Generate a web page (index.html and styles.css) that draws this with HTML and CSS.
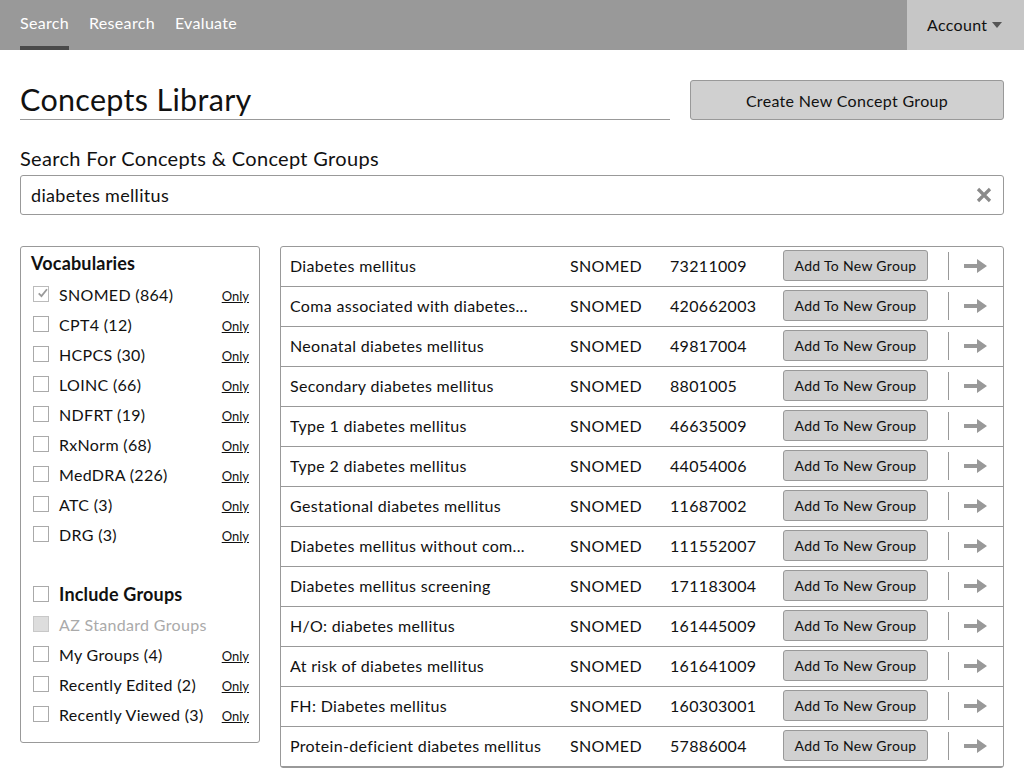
FILE: index.html
```html
<!DOCTYPE html>
<html>
<head>
<meta charset="utf-8">
<link rel="stylesheet" href="styles.css">
</head>
<body>
<header class="nav">
  <nav class="nav-links">
    <a class="nav-link active">Search</a>
    <a class="nav-link">Research</a>
    <a class="nav-link">Evaluate</a>
  </nav>
  <div class="account">Account <span class="caret"></span></div>
</header>
<main class="page">
  <div class="title-row">
    <h1 class="title">Concepts Library</h1>
    <button class="btn create">Create New Concept Group</button>
  </div>
  <label class="search-label">Search For Concepts &amp; Concept Groups</label>
  <div class="search-box">
    <span class="search-text">diabetes mellitus</span>
    <svg class="clear" width="16" height="16" viewBox="0 0 16 16"><path d="M2 2 L14 14 M14 2 L2 14" stroke="#8a8a8a" stroke-width="3.2" stroke-linecap="butt"/></svg>
  </div>
  <div class="content">
    <aside class="filters">
      <h2 class="filters-head">Vocabularies</h2>
      <div class="frow"><span class="cb checked"><svg width="16" height="16" viewBox="0 0 16 16"><path d="M2.5 8.5 L6.5 12.5 L14.5 2.5" fill="none" stroke="#9a9a9a" stroke-width="2.6"/></svg></span><span class="flabel">SNOMED (864)</span><a class="only">Only</a></div>
      <div class="frow"><span class="cb"></span><span class="flabel">CPT4 (12)</span><a class="only">Only</a></div>
      <div class="frow"><span class="cb"></span><span class="flabel">HCPCS (30)</span><a class="only">Only</a></div>
      <div class="frow"><span class="cb"></span><span class="flabel">LOINC (66)</span><a class="only">Only</a></div>
      <div class="frow"><span class="cb"></span><span class="flabel">NDFRT (19)</span><a class="only">Only</a></div>
      <div class="frow"><span class="cb"></span><span class="flabel">RxNorm (68)</span><a class="only">Only</a></div>
      <div class="frow"><span class="cb"></span><span class="flabel">MedDRA (226)</span><a class="only">Only</a></div>
      <div class="frow"><span class="cb"></span><span class="flabel">ATC (3)</span><a class="only">Only</a></div>
      <div class="frow"><span class="cb"></span><span class="flabel">DRG (3)</span><a class="only">Only</a></div>
      <div class="frow groups-head"><span class="cb"></span><span class="flabel strong">Include Groups</span></div>
      <div class="frow disabled"><span class="cb filled"></span><span class="flabel">AZ Standard Groups</span></div>
      <div class="frow"><span class="cb"></span><span class="flabel">My Groups (4)</span><a class="only">Only</a></div>
      <div class="frow"><span class="cb"></span><span class="flabel">Recently Edited (2)</span><a class="only">Only</a></div>
      <div class="frow"><span class="cb"></span><span class="flabel">Recently Viewed (3)</span><a class="only">Only</a></div>
    </aside>
    <section class="results">
      <div class="row"><span class="c-name">Diabetes mellitus</span><span class="c-voc">SNOMED</span><span class="c-code">73211009</span><button class="btn add">Add To New Group</button><span class="sep"></span><svg class="arrow" width="24" height="14" viewBox="0 0 24 14"><path d="M0 5 H13 V0 L23 7 L13 14 V9 H0 Z" fill="#999"/></svg></div>
      <div class="row"><span class="c-name">Coma associated with diabetes...</span><span class="c-voc">SNOMED</span><span class="c-code">420662003</span><button class="btn add">Add To New Group</button><span class="sep"></span><svg class="arrow" width="24" height="14" viewBox="0 0 24 14"><path d="M0 5 H13 V0 L23 7 L13 14 V9 H0 Z" fill="#999"/></svg></div>
      <div class="row"><span class="c-name">Neonatal diabetes mellitus</span><span class="c-voc">SNOMED</span><span class="c-code">49817004</span><button class="btn add">Add To New Group</button><span class="sep"></span><svg class="arrow" width="24" height="14" viewBox="0 0 24 14"><path d="M0 5 H13 V0 L23 7 L13 14 V9 H0 Z" fill="#999"/></svg></div>
      <div class="row"><span class="c-name">Secondary diabetes mellitus</span><span class="c-voc">SNOMED</span><span class="c-code">8801005</span><button class="btn add">Add To New Group</button><span class="sep"></span><svg class="arrow" width="24" height="14" viewBox="0 0 24 14"><path d="M0 5 H13 V0 L23 7 L13 14 V9 H0 Z" fill="#999"/></svg></div>
      <div class="row"><span class="c-name">Type 1 diabetes mellitus</span><span class="c-voc">SNOMED</span><span class="c-code">46635009</span><button class="btn add">Add To New Group</button><span class="sep"></span><svg class="arrow" width="24" height="14" viewBox="0 0 24 14"><path d="M0 5 H13 V0 L23 7 L13 14 V9 H0 Z" fill="#999"/></svg></div>
      <div class="row"><span class="c-name">Type 2 diabetes mellitus</span><span class="c-voc">SNOMED</span><span class="c-code">44054006</span><button class="btn add">Add To New Group</button><span class="sep"></span><svg class="arrow" width="24" height="14" viewBox="0 0 24 14"><path d="M0 5 H13 V0 L23 7 L13 14 V9 H0 Z" fill="#999"/></svg></div>
      <div class="row"><span class="c-name">Gestational diabetes mellitus</span><span class="c-voc">SNOMED</span><span class="c-code">11687002</span><button class="btn add">Add To New Group</button><span class="sep"></span><svg class="arrow" width="24" height="14" viewBox="0 0 24 14"><path d="M0 5 H13 V0 L23 7 L13 14 V9 H0 Z" fill="#999"/></svg></div>
      <div class="row"><span class="c-name">Diabetes mellitus without com...</span><span class="c-voc">SNOMED</span><span class="c-code">111552007</span><button class="btn add">Add To New Group</button><span class="sep"></span><svg class="arrow" width="24" height="14" viewBox="0 0 24 14"><path d="M0 5 H13 V0 L23 7 L13 14 V9 H0 Z" fill="#999"/></svg></div>
      <div class="row"><span class="c-name">Diabetes mellitus screening</span><span class="c-voc">SNOMED</span><span class="c-code">171183004</span><button class="btn add">Add To New Group</button><span class="sep"></span><svg class="arrow" width="24" height="14" viewBox="0 0 24 14"><path d="M0 5 H13 V0 L23 7 L13 14 V9 H0 Z" fill="#999"/></svg></div>
      <div class="row"><span class="c-name">H/O: diabetes mellitus</span><span class="c-voc">SNOMED</span><span class="c-code">161445009</span><button class="btn add">Add To New Group</button><span class="sep"></span><svg class="arrow" width="24" height="14" viewBox="0 0 24 14"><path d="M0 5 H13 V0 L23 7 L13 14 V9 H0 Z" fill="#999"/></svg></div>
      <div class="row"><span class="c-name">At risk of diabetes mellitus</span><span class="c-voc">SNOMED</span><span class="c-code">161641009</span><button class="btn add">Add To New Group</button><span class="sep"></span><svg class="arrow" width="24" height="14" viewBox="0 0 24 14"><path d="M0 5 H13 V0 L23 7 L13 14 V9 H0 Z" fill="#999"/></svg></div>
      <div class="row"><span class="c-name">FH: Diabetes mellitus</span><span class="c-voc">SNOMED</span><span class="c-code">160303001</span><button class="btn add">Add To New Group</button><span class="sep"></span><svg class="arrow" width="24" height="14" viewBox="0 0 24 14"><path d="M0 5 H13 V0 L23 7 L13 14 V9 H0 Z" fill="#999"/></svg></div>
      <div class="row"><span class="c-name">Protein-deficient diabetes mellitus</span><span class="c-voc">SNOMED</span><span class="c-code">57886004</span><button class="btn add">Add To New Group</button><span class="sep"></span><svg class="arrow" width="24" height="14" viewBox="0 0 24 14"><path d="M0 5 H13 V0 L23 7 L13 14 V9 H0 Z" fill="#999"/></svg></div>
    </section>
  </div>
</main>
</body>
</html>
```

FILE: styles.css
```css
* { box-sizing: border-box; }
html, body { margin: 0; padding: 0; }
body {
  font-family: Lato, "Noto Sans", "Liberation Sans", sans-serif;
  letter-spacing: 0.02em;
  color: #111;
  background: #fff;
  overflow: hidden;
  height: 768px;
}
.nav {
  height: 50px;
  background: #999;
  display: flex;
  justify-content: space-between;
}
.nav-links { display: flex; gap: 20px; padding-left: 20px; }
.nav-link {
  color: #fff;
  font-size: 16px;
  line-height: 46px;
  border-bottom: 4px solid transparent;
}
.nav-link.active { border-bottom-color: #4a4a4a; }
.account {
  width: 117px;
  background: #c6c6c6;
  font-size: 16px;
  line-height: 50px;
  padding-left: 20px;
  color: #111;
  display: flex;
  align-items: center;
  gap: 5px;
}
.caret {
  width: 0; height: 0;
  border-left: 5.5px solid transparent;
  border-right: 5.5px solid transparent;
  border-top: 6px solid #555;
}
.page { padding: 30px 20px 0; }
.title-row { display: flex; gap: 20px; height: 40px; }
.title {
  flex: 1;
  margin: 0;
  font-weight: 400;
  font-size: 30.5px;
  line-height: 38px;
  border-bottom: 1px solid #999;
  height: 40px;
}
.btn {
  font-family: inherit;
  letter-spacing: inherit;
  background: #d0d0d0;
  border: 1px solid #999;
  border-radius: 3px;
  color: #111;
  padding: 0;
  cursor: pointer;
}
.create { width: 314px; height: 40px; font-size: 16px; }
.search-label {
  display: block;
  font-size: 20px;
  line-height: 24px;
  margin-top: 26px;
  margin-bottom: 5px;
}
.search-box {
  height: 40px;
  border: 1px solid #999;
  border-radius: 3px;
  display: flex;
  align-items: center;
  justify-content: space-between;
  padding: 0 11px 0 10px;
}
.search-text { font-size: 18px; }
.content { display: flex; gap: 20px; margin-top: 31px; align-items: flex-start; }
.filters {
  width: 240px;
  flex: none;
  border: 1px solid #999;
  border-radius: 3px;
  padding: 4px 10px 13px 10px;
}
.filters-head {
  margin: 0 0 4px;
  font-size: 18px;
  font-weight: 700;
  letter-spacing: 0.01em;
  line-height: 24px;
}
.frow {
  display: flex;
  align-items: center;
  height: 30px;
  font-size: 16px;
}
.cb {
  width: 16px; height: 16px;
  border: 1px solid #aaa;
  margin-left: 2px;
  margin-right: 10px;
  flex: none;
  display: flex;
  align-items: center;
  justify-content: center;
}
.cb.checked { border-color: #bbb; }
.cb.checked svg { margin-top: -3px; margin-left: 3px; }
.cb.filled { background: #ddd; border-color: #c8c8c8; }
.flabel { flex: 1; }
.flabel.strong { font-size: 18px; font-weight: 700; letter-spacing: 0.01em; }
.groups-head { margin-top: 30px; }
.disabled .flabel { color: #aaa; }
.only {
  font-size: 13px;
  letter-spacing: 0;
  text-decoration: underline;
  color: #111;
  margin-top: 4px;
}
.results {
  flex: 1;
  border: 1px solid #999;
  border-radius: 3px;
}
.row {
  display: flex;
  align-items: center;
  height: 40px;
  border-bottom: 1px solid #999;
  font-size: 16px;
  padding-left: 9px;
  padding-bottom: 2px;
}
.c-name {
  width: 280px;
  padding-right: 12px;
  white-space: nowrap;
  overflow: hidden;
  text-overflow: ellipsis;
  flex: none;
}
.c-voc { width: 100px; flex: none; }
.c-code { width: 113px; flex: none; }
.add { width: 145px; height: 31px; font-size: 14px; flex: none; }
.sep {
  width: 1px;
  height: 28px;
  background: #999;
  margin-left: 20px;
  margin-right: 15px;
}
.arrow { flex: none; }
```
